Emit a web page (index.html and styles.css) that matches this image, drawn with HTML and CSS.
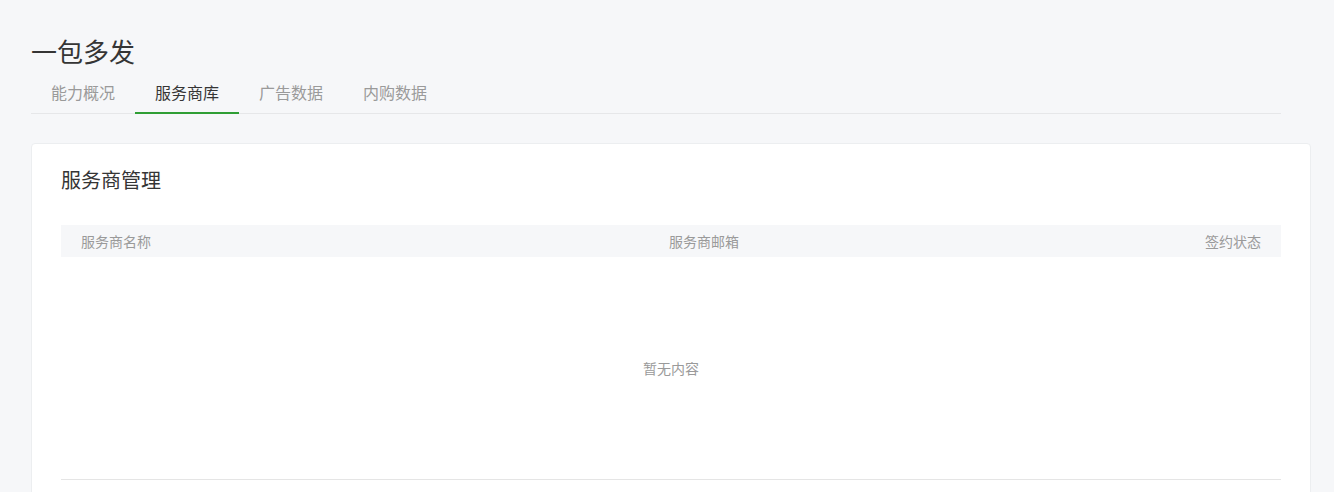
FILE: index.html
```html
<!DOCTYPE html>
<html lang="zh-CN">
<head>
<meta charset="utf-8">
<title>一包多发</title>
<link rel="stylesheet" href="styles.css">
</head>
<body>
<div class="page">
  <h1 class="page-title">一包多发</h1>
  <nav class="tabs">
    <a class="tab">能力概况</a>
    <a class="tab tab-active">服务商库</a>
    <a class="tab">广告数据</a>
    <a class="tab">内购数据</a>
  </nav>
  <section class="card">
    <h2 class="card-title">服务商管理</h2>
    <div class="table">
      <div class="table-head">
        <div class="col col-name">服务商名称</div>
        <div class="col col-mail">服务商邮箱</div>
        <div class="col col-status">签约状态</div>
      </div>
      <div class="table-empty">暂无内容</div>
    </div>
    <div class="card-rest"></div>
  </section>
</div>
</body>
</html>
```

FILE: styles.css
```css
html, body {
  margin: 0;
  padding: 0;
  background: #f6f7f9;
  font-family: "Noto Sans CJK SC", "Noto Sans", "Liberation Sans", sans-serif;
  color: #353535;
}

.page {
  padding: 35px 23px 0 31px;
}

.page-title {
  margin: 0;
  font-size: 26px;
  line-height: 32px;
  font-weight: 400;
  color: #353535;
}

.tabs {
  display: flex;
  margin: 13px 30px 0 0;
  border-bottom: 1px solid #e6e7e9;
}

.tab {
  padding: 0 20px 8px;
  font-size: 16px;
  line-height: 24px;
  color: #9a9a9a;
  border-bottom: 2px solid transparent;
  margin-bottom: -1px;
  cursor: pointer;
}

.tab-active {
  color: #353535;
  border-bottom-color: #2f9e35;
}

.card {
  margin-top: 29px;
  background: #fff;
  border: 1px solid #eceef0;
  border-radius: 4px;
  padding: 22px 29px 0;
}

.card-title {
  margin: 0;
  font-size: 20px;
  line-height: 28px;
  font-weight: 400;
  color: #353535;
}

.table {
  margin-top: 31px;
  border-bottom: 1px solid #e5e5e5;
}

.table-head {
  display: grid;
  grid-template-columns: 588px 1fr auto;
  align-items: center;
  height: 32px;
  padding: 0 20px;
  background: #f6f7f9;
  font-size: 14px;
  color: #9a9a9a;
}

.col-status {
  text-align: right;
}

.table-empty {
  height: 221px;
  padding-bottom: 1px;
  display: flex;
  align-items: center;
  justify-content: center;
  font-size: 14px;
  color: #9a9a9a;
}

.card-rest {
  height: 40px;
}
```
